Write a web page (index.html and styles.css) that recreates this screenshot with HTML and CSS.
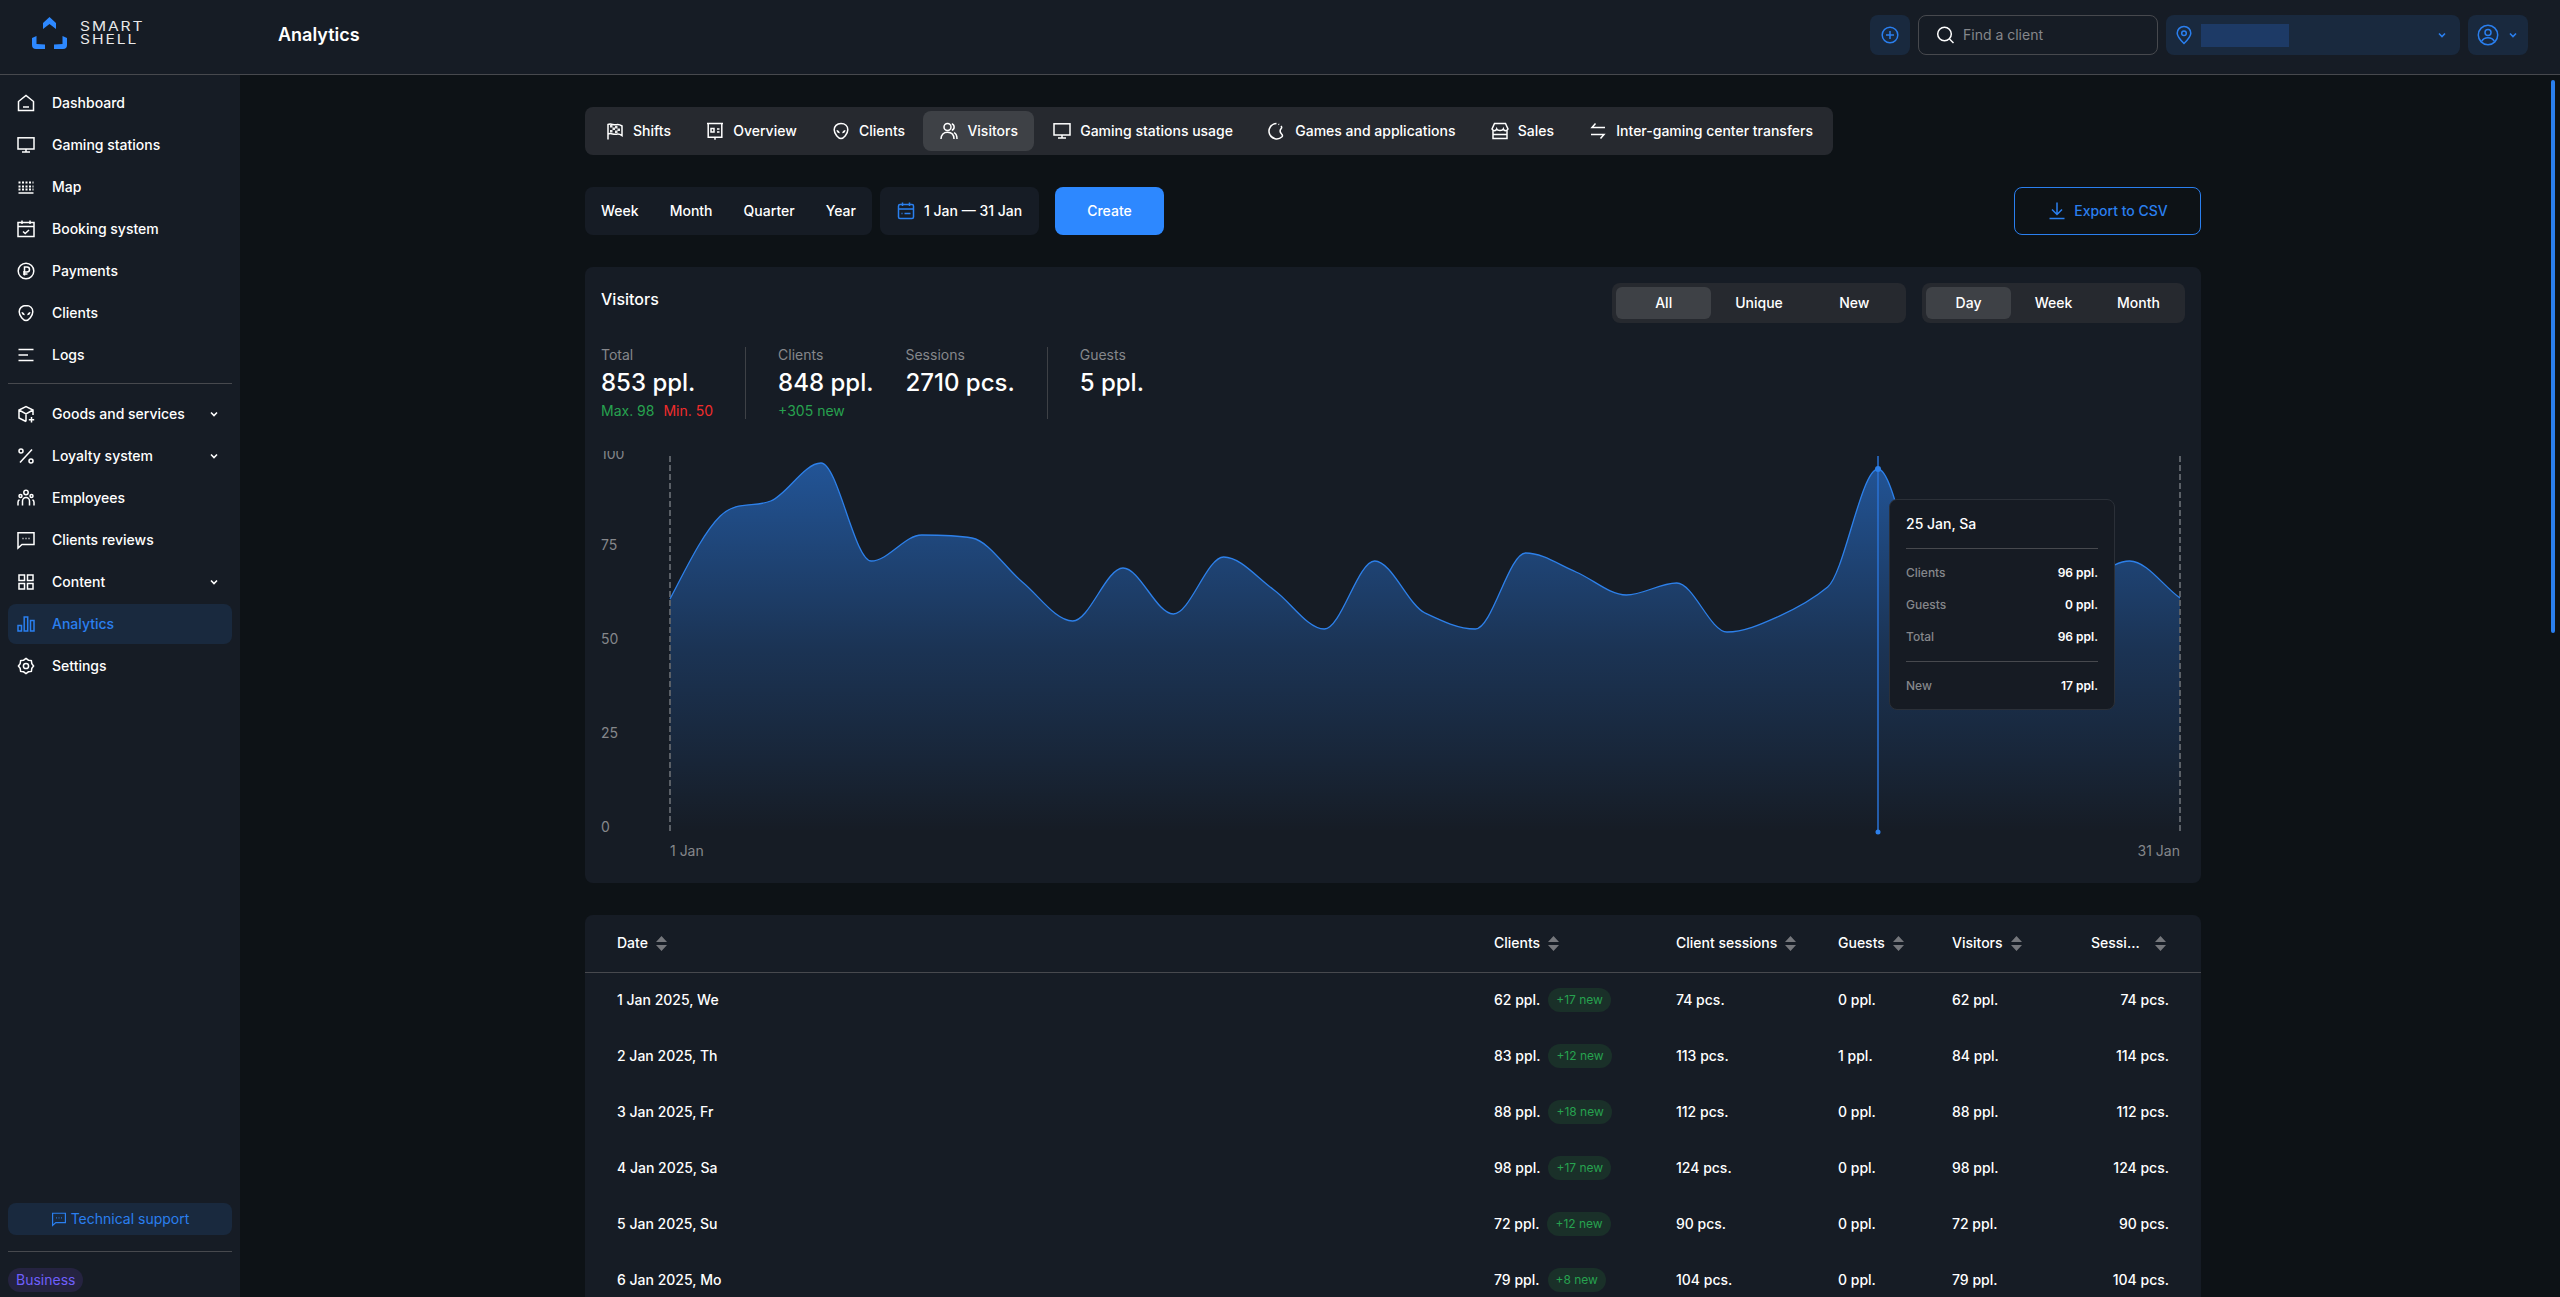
FILE: index.html
```html
<!DOCTYPE html>
<html lang="en">
<head>
    <meta charset="UTF-8">
    <meta name="viewport" content="width=device-width, initial-scale=1.0">
    <title>Smart Shell - Analytics</title>
    <link rel="stylesheet" href="styles.css">
</head>
<body>
    <header class="topbar">
        <div class="logo">
            <svg class="logo-mark" viewBox="0 0 35 32">
                <path d="M17.5 0 L24 6 V12 L17.5 7 L11 12 V6 Z"/>
                <path d="M0 21 L4.5 19 V27 L13 27.5 V32 H4 Q0 32 0 28 Z"/>
                <path d="M35 21 L30.5 19 V27 L22 27.5 V32 H31 Q35 32 35 28 Z"/>
            </svg>
            <div class="logo-text"><span>SMART</span><span>SHELL</span></div>
        </div>
        <h1 class="page-title">Analytics</h1>
        <div class="top-actions">
            <button class="top-btn plus-btn">
                <svg class="icon" viewBox="0 0 20 20"><circle cx="10" cy="10" r="7.8"/><path d="M10 6v8M6 10h8"/></svg>
            </button>
            <div class="search">
                <svg class="icon" viewBox="0 0 20 20"><circle cx="9.5" cy="9" r="6.8"/><path d="M14.5 14l4 4"/></svg>
                <span>Find a client</span>
            </div>
            <button class="top-btn place-btn">
                <svg class="icon" viewBox="0 0 20 20"><path d="M10 18.5C6 14.5 3.2 11.5 3.2 8.2a6.8 6.8 0 0 1 13.6 0c0 3.3-2.8 6.300-6.800 10.300z"/><circle cx="10" cy="8.200" r="2.300"/></svg>
                <span class="place-name"></span>
                <svg class="chev" viewBox="0 0 12 12"><path d="M3 4.500l3 3 3-3"/></svg>
            </button>
            <button class="top-btn user-btn">
                <svg class="icon icon-lg" viewBox="0 0 22 22"><circle cx="11" cy="11" r="9.700"/><circle cx="11" cy="8.500" r="3"/><path d="M4.500 17.500c1.500-2.800 3.800-3.800 6.500-3.800s5 1 6.500 3.800"/></svg>
                <svg class="chev" viewBox="0 0 12 12"><path d="M3 4.500l3 3 3-3"/></svg>
            </button>
        </div>
    </header>

    <div class="layout">
        <aside class="sidebar">
            <nav class="side-nav">
                <a href="#"><svg class="icon" viewBox="0 0 20 20"><path d="M2.500 8.500L10 2.500l7.500 6v9h-15z"/><path d="M7 14h6"/></svg>Dashboard</a>
                <a href="#"><svg class="icon" viewBox="0 0 20 20"><rect x="2" y="2.800" width="16" height="11.200"/><path d="M10 14v3M6 17h8"/></svg>Gaming stations</a>
                <a href="#"><svg class="icon" viewBox="0 0 20 20"><path class="dots" d="M2.500 5.500h15M2.500 9.500h15"/><path class="dots" d="M2.500 12.500h15"/><path d="M2.500 16h15"/></svg>Map</a>
                <a href="#"><svg class="icon" viewBox="0 0 20 20"><rect x="2" y="3.500" width="16" height="14"/><path d="M2 7.500h16M6 1.500v3.500M14 1.500v3.500M7 12.500l2.200 2 3.800-3.500"/></svg>Booking system</a>
                <a href="#"><svg class="icon" viewBox="0 0 20 20"><circle cx="10" cy="10" r="7.800"/><path d="M8.500 14.500V6h2.500a2.500 2.500 0 0 1 0 5H7M7 13h4.500"/></svg>Payments</a>
                <a href="#"><svg class="icon" viewBox="0 0 20 20"><path d="M10 2.500c-4.200 0-6.800 2.800-6.800 6.300 0 4 4.300 8.700 6.800 8.700s6.800-4.700 6.800-8.700c0-3.500-2.600-6.300-6.800-6.300z"/><path class="solid" d="M5.500 9c1.800 0 3.200 1.300 3.300 3.300-1.800 0-3.300-1.300-3.300-3.300zM14.500 9c-1.800 0-3.200 1.300-3.300 3.300 1.800 0 3.300-1.300 3.300-3.300z"/></svg>Clients</a>
                <a href="#"><svg class="icon" viewBox="0 0 20 20"><path d="M2.500 4.500h15M2.500 10h9.500M2.500 15.500h15"/></svg>Logs</a>
                <div class="side-line"></div>
                <a href="#"><svg class="icon" viewBox="0 0 20 20"><path d="M17 11V6l-7-3.500L3 6v8l7 3.500M3 6l7 3.800L17 6M10 9.800v7.700M15.500 13v5.500M12.800 15.800h5.400"/></svg>Goods and services<svg class="chev" viewBox="0 0 12 12"><path d="M3 4.500l3 3 3-3"/></svg></a>
                <a href="#"><svg class="icon" viewBox="0 0 20 20"><path d="M16 3.500L4 16.500"/><circle cx="5" cy="5" r="2"/><circle cx="15" cy="15" r="2"/></svg>Loyalty system<svg class="chev" viewBox="0 0 12 12"><path d="M3 4.500l3 3 3-3"/></svg></a>
                <a href="#"><svg class="icon" viewBox="0 0 20 20"><circle cx="10" cy="4.500" r="2.200"/><circle cx="4.500" cy="8" r="1.500"/><circle cx="15.500" cy="8" r="1.500"/><path d="M6.500 17.500v-4.500a3.500 3.500 0 0 1 7 0v4.500M2 17.500v-3.300a2.600 2.600 0 0 1 1.500-2.400M18 17.500v-3.300a2.600 2.600 0 0 0-1.500-2.400"/></svg>Employees</a>
                <a href="#"><svg class="icon" viewBox="0 0 20 20"><path d="M2 2.800h16v11.700H6L2 18z"/><path d="M6.500 8.500h1M9.500 8.500h1M12.500 8.500h1"/></svg>Clients reviews</a>
                <a href="#"><svg class="icon" viewBox="0 0 20 20"><rect x="3" y="3" width="5.500" height="5.500"/><rect x="11.500" y="3" width="5.500" height="5.500"/><rect x="3" y="11.500" width="5.500" height="5.500"/><rect x="11.500" y="11.500" width="5.500" height="5.500"/></svg>Content<svg class="chev" viewBox="0 0 12 12"><path d="M3 4.500l3 3 3-3"/></svg></a>
                <a href="#" class="active"><svg class="icon" viewBox="0 0 20 20"><rect x="2" y="11.500" width="3.500" height="5.500"/><rect x="8.200" y="3" width="3.500" height="14"/><rect x="14.500" y="6.500" width="3.500" height="10.500"/></svg>Analytics</a>
                <a href="#"><svg class="icon" viewBox="0 0 20 20"><path d="M10 2.400l2.410 1.780 2.960.45.45 2.960L17.600 10l-1.780 2.410-.45 2.960-2.960.45L10 17.600l-2.410-1.780-2.960-.45-.45-2.960L2.400 10l1.780-2.410.45-2.960 2.960-.45z"/><circle cx="10" cy="10" r="2.600"/></svg>Settings</a>
            </nav>
            <div class="side-bottom">
                <button class="support-btn">
                    <svg class="icon icon-sm" viewBox="0 0 20 20"><path d="M2 2.800h16v11.700H6L2 18z"/><path d="M6.500 8.500h1M9.500 8.500h1M12.500 8.500h1"/></svg>
                    Technical support
                </button>
                <div class="side-line"></div>
                <span class="plan">Business</span>
            </div>
        </aside>

        <main class="main">
            <div class="scroll-thumb"></div>
            <div class="content">
                <div class="tabs">
                    <a href="#"><svg class="icon" viewBox="0 0 20 20"><path d="M3 18.500V3.500c3-1.500 5.500 1 8.500.2 2-.5 3.500 0 5.500 1.300v9.500c-2-1.300-3.500-1.800-5.500-1.300-3 .8-5.500-1.700-8.500-.2"/><path class="solid thin" d="M5 4h2.500v2.500H5zM10 5h2.500v2.500H10zM7.500 6.500H10V9H7.500zM12.500 7.500H15V10h-2.500zM5 9h2.500v2.500H5zM10 9.500h2.500V12H10z"/></svg>Shifts</a>
                    <a href="#"><svg class="icon" viewBox="0 0 20 20"><path d="M2 2.500h16M3.200 2.500v13.800h13.600V2.500M10 16.300v2.500"/><path d="M6 7.500h3v3.500H6zM12 8h2.500M12 11h2.500"/></svg>Overview</a>
                    <a href="#"><svg class="icon" viewBox="0 0 20 20"><path d="M10 2.500c-4.200 0-6.800 2.800-6.800 6.300 0 4 4.300 8.700 6.800 8.700s6.800-4.700 6.800-8.700c0-3.500-2.600-6.300-6.800-6.300z"/><path class="solid" d="M5.500 9c1.800 0 3.200 1.300 3.300 3.300-1.800 0-3.300-1.300-3.300-3.300zM14.500 9c-1.800 0-3.200 1.300-3.300 3.300 1.800 0 3.300-1.300 3.300-3.300z"/></svg>Clients</a>
                    <a href="#" class="active"><svg class="icon" viewBox="0 0 20 20"><circle cx="8.500" cy="6" r="3.500"/><path d="M2 18c0-4.500 2.800-6.800 6.500-6.800S15 13.500 15 18M12.800 2.700a3.500 3.500 0 0 1 0 6.600M15 11.700c2 1 3 3.200 3 6.300"/></svg>Visitors</a>
                    <a href="#"><svg class="icon" viewBox="0 0 20 20"><rect x="2" y="2.800" width="16" height="11.200"/><path d="M10 14v3M6 17h8"/></svg>Gaming stations usage</a>
                    <a href="#"><svg class="icon" viewBox="0 0 20 20"><path d="M9.500 2.500A7.700 7.700 0 1 0 15 15.800c1-1.100.4-2-.6-3-1.700-1.700-1.600-3.600-.2-5.300.9-1 .5-1.700-.2-2.500"/><path d="M11.500 3.200l.6.400"/></svg>Games and applications</a>
                    <a href="#"><svg class="icon" viewBox="0 0 20 20"><path d="M4.500 2.500h11L18 8c-.8 2.200-4 2.200-4.700 0-.8 2-5.800 2-6.600 0C6 10.200 2.800 10.200 2 8z"/><path d="M3 9.500v8h14v-8M3 13.500h14"/></svg>Sales</a>
                    <a href="#"><svg class="icon" viewBox="0 0 20 20"><path d="M17 6.500H4l3.500-4M3 13.500h13l-3.500 4"/></svg>Inter-gaming center transfers</a>
                </div>

                <div class="controls">
                    <div class="period">
                        <span>Week</span><span>Month</span><span>Quarter</span><span>Year</span>
                    </div>
                    <div class="date-range">
                        <svg class="icon icon-blue" viewBox="0 0 20 20"><rect x="2.500" y="3.500" width="15" height="14" rx="1.500"/><path d="M2.500 8h15M6.500 1.500v3.500M13.500 1.500v3.500M5.500 12.500h1M8.500 12.500h6"/></svg>
                        1 Jan — 31 Jan
                    </div>
                    <button class="create-btn">Create</button>
                    <button class="export-btn">
                        <svg class="icon" viewBox="0 0 20 20"><path d="M10 1.500v12M5 8.500l5 5 5-5M2.500 17.500h15"/></svg>
                        Export to CSV
                    </button>
                </div>

                <section class="card chart-card">
                    <div class="card-head">
                        <h2>Visitors</h2>
                        <div class="card-filters">
                            <div class="segment seg-kind"><span class="on">All</span><span>Unique</span><span>New</span></div>
                            <div class="segment seg-range"><span class="on">Day</span><span>Week</span><span>Month</span></div>
                        </div>
                    </div>
                    <div class="stats">
                        <div class="stat">
                            <span class="stat-label">Total</span>
                            <span class="stat-value">853 ppl.</span>
                            <span class="stat-sub"><span class="green">Max. 98</span><span class="red">Min. 50</span></span>
                        </div>
                        <div class="stat-line"></div>
                        <div class="stat">
                            <span class="stat-label">Clients</span>
                            <span class="stat-value">848 ppl.</span>
                            <span class="stat-sub"><span class="green">+305 new</span></span>
                        </div>
                        <div class="stat">
                            <span class="stat-label">Sessions</span>
                            <span class="stat-value">2710 pcs.</span>
                        </div>
                        <div class="stat-line"></div>
                        <div class="stat">
                            <span class="stat-label">Guests</span>
                            <span class="stat-value">5 ppl.</span>
                        </div>
                    </div>
                    <div class="chart">
                        <svg class="chart-svg" viewBox="601 451 1584 416">
                            <defs>
                                <linearGradient id="area" gradientUnits="userSpaceOnUse" x1="0" y1="463" x2="0" y2="832">
                                    <stop offset="0" stop-color="#2d88ff" stop-opacity="0.52"/>
                                    <stop offset="0.5" stop-color="#2d88ff" stop-opacity="0.22"/>
                                    <stop offset="0.8" stop-color="#2d88ff" stop-opacity="0.09"/>
                                    <stop offset="1" stop-color="#2d88ff" stop-opacity="0"/>
                                </linearGradient>
                            </defs>
                            <text class="axis" x="601" y="459">100</text>
                            <text class="axis" x="601" y="550">75</text>
                            <text class="axis" x="601" y="644">50</text>
                            <text class="axis" x="601" y="738">25</text>
                            <text class="axis" x="601" y="832">0</text>
                            <text class="axis" x="670" y="856">1 Jan</text>
                            <text class="axis" x="2180" y="856" text-anchor="end">31 Jan</text>
                            <path class="area" d="M670 599C686.800 567 703.500 532.300 720.300 516C737.100 499.700 753.900 508 770.700 501C787.500 494 804.200 463 821 463C837.800 463 854.500 561 871.300 561C888.100 561 904.900 535 921.700 535C938.500 535 955.200 535 972 538C988.800 541 1005.500 568.200 1022.300 582C1039.100 595.800 1055.900 621 1072.700 621C1089.500 621 1106.200 568 1123 568C1139.800 568 1156.500 614 1173.300 614C1190.100 614 1206.900 557 1223.700 557C1240.500 557 1257.200 578 1274 590C1290.800 602 1307.500 629 1324.300 629C1341.100 629 1357.900 561 1374.700 561C1391.500 561 1408.200 605 1425 613C1441.800 621 1458.500 629 1475.300 629C1492.100 629 1508.900 553 1525.700 553C1542.500 553 1559.200 565 1576 572C1592.800 579 1609.500 595 1626.300 595C1643.100 595 1659.900 583 1676.700 583C1693.500 583 1710.200 632 1727 632C1743.800 632 1760.500 624.500 1777.300 617C1794.100 609.500 1810.900 601 1827.700 587C1844.500 573 1861.200 469 1878 469C1894.800 469 1911.500 587 1928.300 595C1945.100 603 1961.900 610 1978.700 610C1995.500 610 2012.200 604 2029 600C2045.800 596 2062.500 591.500 2079.300 585C2096.100 578.500 2112.900 561 2129.700 561C2146.500 561 2163.200 586 2180 598V832H670Z"/>
                            <path class="guide" d="M670 456V832M2180 456V832"/>
                            <path class="curve" d="M670 599C686.800 567 703.500 532.300 720.300 516C737.100 499.700 753.900 508 770.700 501C787.500 494 804.200 463 821 463C837.800 463 854.500 561 871.300 561C888.100 561 904.900 535 921.700 535C938.500 535 955.200 535 972 538C988.800 541 1005.500 568.200 1022.300 582C1039.100 595.800 1055.900 621 1072.700 621C1089.500 621 1106.200 568 1123 568C1139.800 568 1156.500 614 1173.300 614C1190.100 614 1206.900 557 1223.700 557C1240.500 557 1257.200 578 1274 590C1290.800 602 1307.500 629 1324.300 629C1341.100 629 1357.900 561 1374.700 561C1391.500 561 1408.200 605 1425 613C1441.800 621 1458.500 629 1475.300 629C1492.100 629 1508.900 553 1525.700 553C1542.500 553 1559.200 565 1576 572C1592.800 579 1609.500 595 1626.300 595C1643.100 595 1659.900 583 1676.700 583C1693.500 583 1710.200 632 1727 632C1743.800 632 1760.500 624.500 1777.300 617C1794.100 609.500 1810.900 601 1827.700 587C1844.500 573 1861.200 469 1878 469C1894.800 469 1911.500 587 1928.300 595C1945.100 603 1961.900 610 1978.700 610C1995.500 610 2012.200 604 2029 600C2045.800 596 2062.500 591.500 2079.300 585C2096.100 578.500 2112.900 561 2129.700 561C2146.500 561 2163.200 586 2180 598"/>
                            <path class="cursor" d="M1878 456V832"/>
                            <circle class="cursor-dot" cx="1878" cy="469" r="3"/>
                            <circle class="cursor-dot" cx="1878" cy="832" r="2.500"/>
                        </svg>
                        <div class="chart-tip">
                            <div class="tip-title">25 Jan, Sa</div>
                            <div class="tip-rows">
                                <div class="tip-row"><span>Clients</span><b>96 ppl.</b></div>
                                <div class="tip-row"><span>Guests</span><b>0 ppl.</b></div>
                                <div class="tip-row"><span>Total</span><b>96 ppl.</b></div>
                            </div>
                            <div class="tip-rows tip-last">
                                <div class="tip-row"><span>New</span><b>17 ppl.</b></div>
                            </div>
                        </div>
                    </div>
                </section>

                <section class="card table-card">
                    <table>
                        <thead>
                            <tr>
                                <th class="col-date"><span class="th-in">Date<svg class="sort" viewBox="0 0 11 15"><path d="M5.500 0L11 6H0zM5.500 15L0 9h11z"/></svg></span></th>
                                <th class="col-clients"><span class="th-in">Clients<svg class="sort" viewBox="0 0 11 15"><path d="M5.500 0L11 6H0zM5.500 15L0 9h11z"/></svg></span></th>
                                <th class="col-sessions"><span class="th-in">Client sessions<svg class="sort" viewBox="0 0 11 15"><path d="M5.500 0L11 6H0zM5.500 15L0 9h11z"/></svg></span></th>
                                <th class="col-guests"><span class="th-in">Guests<svg class="sort" viewBox="0 0 11 15"><path d="M5.500 0L11 6H0zM5.500 15L0 9h11z"/></svg></span></th>
                                <th class="col-visitors"><span class="th-in">Visitors<svg class="sort" viewBox="0 0 11 15"><path d="M5.500 0L11 6H0zM5.500 15L0 9h11z"/></svg></span></th>
                                <th class="col-last"><span class="th-in"><span class="cut">Sessions</span><svg class="sort" viewBox="0 0 11 15"><path d="M5.500 0L11 6H0zM5.500 15L0 9h11z"/></svg></span></th>
                            </tr>
                        </thead>
                        <tbody>
                            <tr><td>1 Jan 2025, We</td><td><span class="cell-new">62 ppl.<span class="new-badge">+17 new</span></span></td><td>74 pcs.</td><td>0 ppl.</td><td>62 ppl.</td><td>74 pcs.</td></tr>
                            <tr><td>2 Jan 2025, Th</td><td><span class="cell-new">83 ppl.<span class="new-badge">+12 new</span></span></td><td>113 pcs.</td><td>1 ppl.</td><td>84 ppl.</td><td>114 pcs.</td></tr>
                            <tr><td>3 Jan 2025, Fr</td><td><span class="cell-new">88 ppl.<span class="new-badge">+18 new</span></span></td><td>112 pcs.</td><td>0 ppl.</td><td>88 ppl.</td><td>112 pcs.</td></tr>
                            <tr><td>4 Jan 2025, Sa</td><td><span class="cell-new">98 ppl.<span class="new-badge">+17 new</span></span></td><td>124 pcs.</td><td>0 ppl.</td><td>98 ppl.</td><td>124 pcs.</td></tr>
                            <tr><td>5 Jan 2025, Su</td><td><span class="cell-new">72 ppl.<span class="new-badge">+12 new</span></span></td><td>90 pcs.</td><td>0 ppl.</td><td>72 ppl.</td><td>90 pcs.</td></tr>
                            <tr><td>6 Jan 2025, Mo</td><td><span class="cell-new">79 ppl.<span class="new-badge">+8 new</span></span></td><td>104 pcs.</td><td>0 ppl.</td><td>79 ppl.</td><td>104 pcs.</td></tr>
                        </tbody>
                    </table>
                </section>
            </div>
        </main>
    </div>
</body>
</html>
```
FILE: styles.css
```css
* {
    margin: 0;
    padding: 0;
    box-sizing: border-box;
}

html, body {
    height: 100%;
    overflow: hidden;
}

body {
    display: flex;
    flex-direction: column;
    font-family: 'Inter', 'Noto Sans', sans-serif;
    font-size: 14px;
    font-weight: 500;
    line-height: 20px;
    color: #fff;
    background-color: #0d1216;
}

a {
    color: inherit;
    text-decoration: none;
}

button {
    font: inherit;
    color: inherit;
    border: none;
    background: none;
}

/* icons */
.icon {
    flex: none;
    width: 20px;
    height: 20px;
    fill: none;
    stroke: currentColor;
    stroke-width: 1.5;
}

.icon .solid {
    fill: currentColor;
    stroke: none;
}

.icon .thin {
    opacity: 0.9;
}

.icon .dots {
    stroke-width: 2;
    stroke-dasharray: 2 1.5;
}

.icon-lg {
    width: 22px;
    height: 22px;
}

.icon-sm {
    width: 16px;
    height: 16px;
}

.icon-blue {
    color: #2a7fef;
}

.chev {
    flex: none;
    width: 12px;
    height: 12px;
    fill: none;
    stroke: currentColor;
    stroke-width: 1.6;
}

/* top bar */
.topbar {
    flex: none;
    height: 75px;
    display: flex;
    align-items: center;
    padding: 0 32px 4px 0;
    background-color: #161c25;
    border-bottom: 1px solid #47494e;
}

.logo {
    width: 278px;
    display: flex;
    align-items: center;
    gap: 13px;
    padding-left: 32px;
    margin-bottom: 4px;
}

.logo-mark {
    width: 35px;
    height: 32px;
    fill: #2d88ff;
}

.logo-text {
    display: flex;
    flex-direction: column;
    font-size: 13px;
    font-weight: 400;
    line-height: 13px;
    letter-spacing: 1.6px;
    transform: scaleX(1.2);
    transform-origin: left;
    color: #e9e9ea;
}

.page-title {
    font-size: 18px;
    font-weight: 600;
    line-height: 24px;
}

.top-actions {
    margin-left: auto;
    display: flex;
    gap: 8px;
}

.top-btn {
    height: 40px;
    display: flex;
    align-items: center;
    border-radius: 8px;
    color: #2a7fef;
    background-color: #19293e;
}

.plus-btn {
    width: 40px;
    justify-content: center;
}

.search {
    width: 240px;
    height: 40px;
    display: flex;
    align-items: center;
    gap: 8px;
    padding: 0 16px;
    border: 1px solid #47494e;
    border-radius: 8px;
    font-weight: 400;
    color: #85878b;
}

.search .icon {
    color: #fff;
}

.place-btn {
    width: 294px;
    padding: 0 12px 0 8px;
}

.place-name {
    width: 88px;
    height: 23px;
    margin-left: 7px;
    background-color: #1d3a66;
}

.place-btn .chev {
    margin-left: auto;
}

.user-btn {
    width: 60px;
    gap: 8px;
    padding-left: 9px;
}

/* sidebar */
.layout {
    flex: 1;
    min-height: 0;
    display: flex;
}

.sidebar {
    flex: none;
    width: 240px;
    display: flex;
    flex-direction: column;
    padding: 8px 8px 5px;
    background-color: #161c25;
}

.side-nav {
    display: flex;
    flex-direction: column;
    gap: 2px;
}

.side-nav a {
    height: 40px;
    display: flex;
    align-items: center;
    gap: 16px;
    padding: 0 12px 0 8px;
    border-radius: 8px;
}

.side-nav a .chev {
    margin-left: auto;
}

.side-nav a.active {
    color: #2a7fef;
    background-color: #19293e;
}

.side-line {
    height: 1px;
    background-color: #47494e;
}

.side-nav .side-line {
    margin: 6px 0 8px;
}

.side-bottom {
    margin-top: auto;
    display: flex;
    flex-direction: column;
    align-items: flex-start;
}

.support-btn {
    width: 100%;
    height: 32px;
    display: flex;
    align-items: center;
    justify-content: center;
    gap: 4px;
    border-radius: 8px;
    font-weight: 400;
    color: #2a7fef;
    background-color: #19293e;
}

.side-bottom .side-line {
    width: 100%;
    margin: 16px 0;
}

.plan {
    height: 24px;
    display: flex;
    align-items: center;
    padding: 0 8px;
    border-radius: 12px;
    font-weight: 400;
    color: #6f5ffb;
    background-color: #252340;
}

/* main column */
.main {
    flex: 1;
    min-width: 0;
    position: relative;
    overflow: hidden;
    padding: 32px 14px 0 0;
}

.scroll-thumb {
    position: absolute;
    top: 5px;
    right: 5px;
    width: 4px;
    height: 553px;
    border-radius: 2px;
    background-color: #2a7fef;
}

.content {
    width: 1616px;
    margin: 0 auto;
    display: flex;
    flex-direction: column;
    gap: 32px;
}

.tabs {
    align-self: flex-start;
    width: 1248px;
    display: flex;
    justify-content: space-between;
    padding: 4px;
    border-radius: 8px;
    background-color: #26292f;
}

.tabs a {
    height: 40px;
    display: flex;
    align-items: center;
    gap: 8px;
    padding: 0 16px;
    border-radius: 8px;
}

.tabs a.active {
    background-color: #3e4146;
}

.controls {
    display: flex;
    gap: 8px;
}

.period, .date-range {
    height: 48px;
    display: flex;
    align-items: center;
    padding: 0 16px;
    border-radius: 8px;
    background-color: #161c25;
}

.period {
    width: 287px;
    justify-content: space-between;
}

.date-range {
    width: 159px;
    gap: 8px;
    white-space: nowrap;
}

.create-btn {
    width: 109px;
    height: 48px;
    margin-left: 8px;
    border-radius: 8px;
    background-color: #2d88ff;
}

.export-btn {
    width: 187px;
    height: 48px;
    margin-left: auto;
    display: flex;
    align-items: center;
    justify-content: center;
    gap: 7px;
    border: 1px solid #2a7fef;
    border-radius: 8px;
    color: #2a7fef;
}

.card {
    border-radius: 8px;
    background-color: #161c25;
}

.chart-card {
    padding: 16px;
}

.card-head {
    display: flex;
    justify-content: space-between;
}

.card-head h2 {
    padding-top: 4px;
    font-size: 16px;
    font-weight: 500;
    line-height: 24px;
}

.card-filters {
    display: flex;
    gap: 16px;
}

.segment {
    height: 40px;
    display: grid;
    grid-auto-flow: column;
    grid-auto-columns: 1fr;
    padding: 4px;
    border-radius: 8px;
    background-color: #26292f;
}

.seg-kind {
    width: 294px;
}

.seg-range {
    width: 263px;
}

.segment span {
    display: flex;
    align-items: center;
    justify-content: center;
    border-radius: 6px;
}

.segment .on {
    background-color: #3e4146;
}

.stats {
    margin-top: 24px;
    display: flex;
    gap: 32px;
}

.stat {
    display: flex;
    flex-direction: column;
    gap: 4px;
}

.stat-label {
    line-height: 16px;
    font-weight: 400;
    color: #85878b;
}

.stat-value {
    font-size: 24px;
    line-height: 32px;
}

.stat-sub {
    display: flex;
    gap: 9px;
    font-weight: 400;
    line-height: 16px;
}

.green {
    color: #27a24f;
}

.red {
    color: #f02c2c;
}

.stat-line {
    width: 1px;
    background-color: #3e4146;
}

/* chart */
.chart {
    position: relative;
    margin-top: 32px;
    height: 416px;
}

.chart-svg {
    display: block;
    width: 100%;
    height: 100%;
}

.axis {
    font-family: 'Inter', sans-serif;
    font-size: 14px;
    font-weight: 400;
    fill: #85878b;
}

.area {
    fill: url(#area);
}

.curve {
    fill: none;
    stroke: #2d80ea;
    stroke-width: 1.3;
}

.guide {
    fill: none;
    stroke: #5a5f66;
    stroke-width: 2;
    stroke-dasharray: 6 3;
}

.cursor {
    stroke: #2a72d4;
    stroke-width: 1.5;
}

.cursor-dot {
    fill: #2d80ea;
}

.chart-tip {
    position: absolute;
    left: 1288px;
    top: 48px;
    width: 226px;
    height: 211px;
    padding: 14px 16px 0;
    border: 1px solid #2b3038;
    border-radius: 8px;
    background-color: #161b23;
}

.tip-title {
    padding-bottom: 14px;
    border-bottom: 1px solid #47494e;
}

.tip-rows {
    display: flex;
    flex-direction: column;
    gap: 12px;
    padding: 14px 0;
    font-size: 12px;
}

.tip-rows:not(.tip-last) {
    border-bottom: 1px solid #47494e;
}

.tip-row {
    display: flex;
    justify-content: space-between;
    font-weight: 500;
    color: #85878b;
}

.tip-row b {
    font-weight: 600;
    color: #fff;
}

/* table */
.table-card {
    overflow: hidden;
}

table {
    width: 100%;
    table-layout: fixed;
    border-collapse: collapse;
}

th {
    height: 57px;
    font-weight: 500;
    text-align: left;
    border-bottom: 1px solid #47494e;
}

td {
    height: 56px;
}

th:first-child, td:first-child {
    padding-left: 32px;
}

th:last-child, td:last-child {
    padding-right: 32px;
    text-align: right;
}

.col-date { width: 909px; }
.col-clients { width: 182px; }
.col-sessions { width: 162px; }
.col-guests { width: 114px; }
.col-visitors { width: 139px; }

.th-in {
    display: inline-flex;
    align-items: center;
    gap: 8px;
}

.col-last .th-in {
    width: 78px;
    gap: 14px;
}

.cut {
    width: 50px;
    flex: none;
    overflow: hidden;
    white-space: nowrap;
    text-overflow: ellipsis;
}

.sort {
    flex: none;
    width: 11px;
    height: 15px;
    fill: #75777c;
}

.cell-new {
    display: inline-flex;
    align-items: center;
    gap: 8px;
}

.new-badge {
    height: 24px;
    display: flex;
    align-items: center;
    padding: 0 8px;
    border-radius: 12px;
    font-size: 12px;
    font-weight: 400;
    color: #27a24f;
    background-color: #1a3029;
}
```
